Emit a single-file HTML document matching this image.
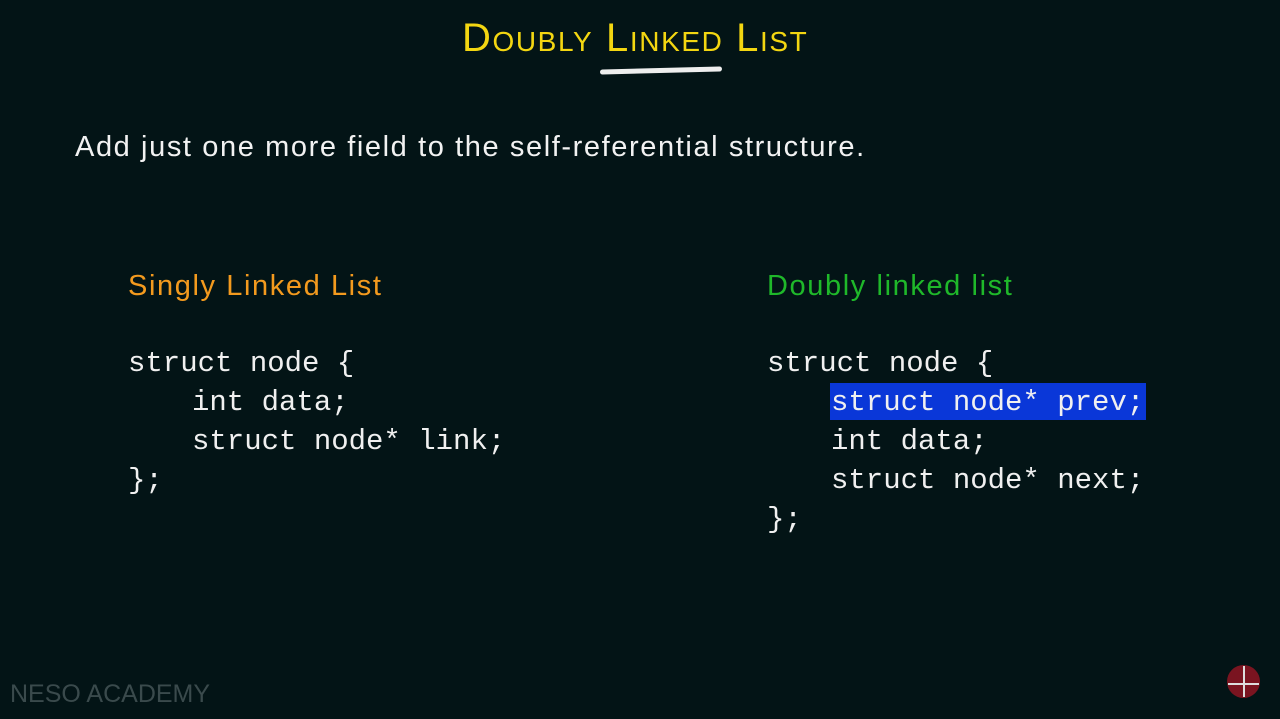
<!DOCTYPE html>
<html><head><meta charset="utf-8"><style>
body{margin:0;width:1280px;height:719px;background:#031416;overflow:hidden;position:relative;font-family:"Liberation Sans",sans-serif}
.a{position:absolute;white-space:pre}
.t{left:462px;top:16px;color:#f3d611;font-size:40px;font-variant:small-caps;letter-spacing:1.6px}
.m{font-family:"Liberation Mono",monospace;font-size:29px;color:#f0f0f0;line-height:39px}
.i{padding-left:64px}
</style></head><body>
<div class="a t">Doubly Linked List</div>
<div class="a" style="left:600px;top:68px;width:122px;height:5px;background:#eee;border-radius:3px;transform:rotate(-1.5deg)"></div>
<div class="a" style="left:75px;top:131px;font-size:29px;letter-spacing:1.6px;color:#f2f2f2">Add just one more field to the self-referential structure.</div>
<div class="a" style="left:128px;top:270px;font-size:29px;letter-spacing:1.6px;color:#f39a1e">Singly Linked List</div>
<div class="a" style="left:767px;top:270px;font-size:29px;letter-spacing:1.6px;color:#1fb82a">Doubly linked list</div>
<div class="a m" style="left:128px;top:344px">struct node {
<span class="i">int data;</span>
<span class="i">struct node* link;</span>
};</div>
<div class="a" style="left:830px;top:383px;width:316px;height:37px;background:#0a37d8"></div>
<div class="a m" style="left:767px;top:344px">struct node {
<span class="i">struct node* prev;</span>
<span class="i">int data;</span>
<span class="i">struct node* next;</span>
};</div>
<div class="a" style="left:10px;top:680px;font-size:25px;color:#3a4a4c">NESO ACADEMY</div>
<div class="a" style="left:1227px;top:665px;width:33px;height:33px;border-radius:50%;background:#7a1420"></div>
<div class="a" style="left:1243px;top:666px;width:2px;height:31px;background:#ddd"></div>
<div class="a" style="left:1228px;top:683px;width:31px;height:2px;background:#ddd"></div>
</body></html>
